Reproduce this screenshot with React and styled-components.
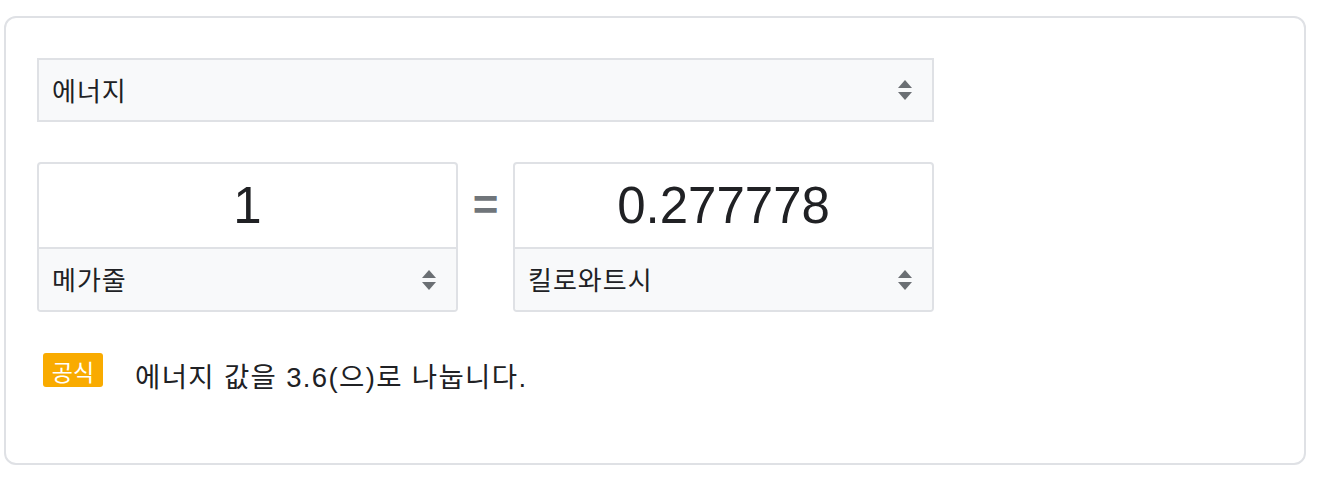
import React from 'react';
import styled, { createGlobalStyle } from 'styled-components';

const GlobalStyle = createGlobalStyle`
  body {
    margin: 0;
    background: #fff;
    font-family: "Liberation Sans", "Noto Sans CJK KR", sans-serif;
    color: #202124;
  }
`;

const Arrows = () => (
  <svg width="16" height="22" viewBox="0 0 16 22">
    <path d="M8 1 L15 9 L1 9 Z" fill="#6b6f73" />
    <path d="M1 13 L15 13 L8 21 Z" fill="#6b6f73" />
  </svg>
);

export default function App() {
  return (
    <>
      <GlobalStyle />
      <Page>
        <Card>
          <Select width="897px">
            <span>에너지</span>
            <Arrows />
          </Select>

          <ConvertRow>
            <UnitBox>
              <Value>1</Value>
              <Select inner>
                <span>메가줄</span>
                <Arrows />
              </Select>
            </UnitBox>
            <Equals>=</Equals>
            <UnitBox>
              <Value>0.277778</Value>
              <Select inner>
                <span>킬로와트시</span>
                <Arrows />
              </Select>
            </UnitBox>
          </ConvertRow>

          <Formula>
            <Badge>공식</Badge>
            <FormulaText>에너지 값을 3.6(으)로 나눕니다.</FormulaText>
          </Formula>
        </Card>
      </Page>
    </>
  );
}

const Page = styled.div`
  padding: 16px 13px 0 4px;
`;

const Card = styled.div`
  width: 1302px;
  height: 449px;
  box-sizing: border-box;
  border: 2px solid #dfe1e5;
  border-radius: 12px;
  padding: 40px 31px 0;
  display: flex;
  flex-direction: column;
`;

const Select = styled.div`
  display: flex;
  align-items: center;
  justify-content: space-between;
  box-sizing: border-box;
  width: ${(p) => (p.inner ? '100%' : p.width)};
  height: ${(p) => (p.inner ? '63px' : '64px')};
  padding: 0 19px 0 13px;
  background: #f8f9fa;
  border: ${(p) => (p.inner ? 'none' : '2px solid #dfe1e5')};
  border-top: 2px solid #dfe1e5;
  font-size: 26px;
  letter-spacing: 1px;
  color: #202124;

  span {
    line-height: 1;
    padding-top: 3px;
  }
`;

const ConvertRow = styled.div`
  display: flex;
  align-items: flex-start;
  margin-top: 40px;
`;

const UnitBox = styled.div`
  width: 421px;
  height: 150px;
  box-sizing: border-box;
  border: 2px solid #dfe1e5;
  border-radius: 4px;
  overflow: hidden;
  display: flex;
  flex-direction: column;
  background: #fff;
`;

const Value = styled.div`
  flex: 1;
  display: flex;
  align-items: center;
  justify-content: center;
  font-family: "Liberation Sans", Arial, sans-serif;
  font-size: 51px;
  color: #202124;
`;

const Equals = styled.div`
  width: 55px;
  height: 86px;
  display: flex;
  align-items: center;
  justify-content: center;
  font-family: "Liberation Sans", Arial, sans-serif;
  font-size: 44px;
  font-weight: bold;
  color: #70757a;
`;

const Formula = styled.div`
  display: flex;
  align-items: flex-start;
  margin-top: 41px;
  padding-left: 6px;
`;

const Badge = styled.div`
  background: #f9ab00;
  color: #fff;
  border-radius: 3px;
  font-size: 23px;
  line-height: 1;
  width: 60px;
  height: 34px;
  box-sizing: border-box;
  padding-top: 6px;
  display: flex;
  align-items: center;
  justify-content: center;
`;

const FormulaText = styled.div`
  margin-left: 32px;
  padding-top: 8px;
  font-size: 27.5px;
  letter-spacing: 1.35px;
  line-height: 34px;
  color: #202124;
`;
